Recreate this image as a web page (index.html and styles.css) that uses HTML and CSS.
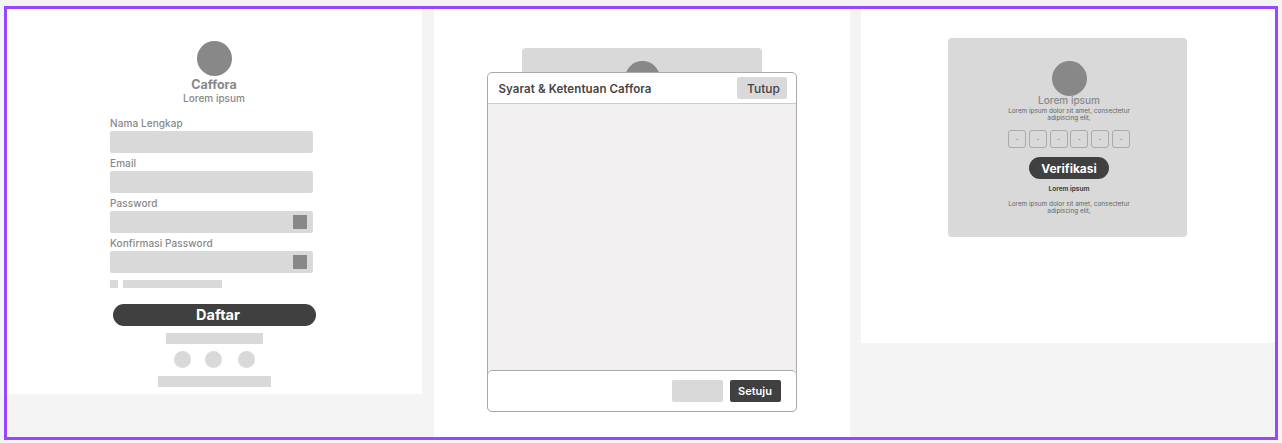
FILE: index.html
```html
<!DOCTYPE html>
<html lang="en">
<head>
  <meta charset="UTF-8" />
  <title>Caffora Wireframe</title>
  <link rel="stylesheet" href="styles.css">
</head>
<body>
  <div class="frame">

    <section class="panel panel-register">
      <div class="avatar"></div>
      <h1 class="brand">Caffora</h1>
      <p class="tagline">Lorem ipsum</p>

      <form class="form">
        <label class="label">Nama Lengkap</label>
        <div class="input"></div>
        <label class="label">Email</label>
        <div class="input"></div>
        <label class="label">Password</label>
        <div class="input"><span class="eye"></span></div>
        <label class="label">Konfirmasi Password</label>
        <div class="input"><span class="eye"></span></div>
        <div class="terms">
          <span class="check"></span>
          <span class="terms-bar"></span>
        </div>
      </form>

      <button class="btn-daftar">Daftar</button>
      <div class="bar bar-or"></div>
      <div class="socials">
        <span class="social"></span>
        <span class="social"></span>
        <span class="social"></span>
      </div>
      <div class="bar bar-login"></div>
    </section>

    <section class="panel panel-terms">
      <div class="back-card">
        <div class="avatar"></div>
      </div>
      <div class="modal">
        <header class="modal-head">
          <h2>Syarat &amp; Ketentuan Caffora</h2>
          <button class="btn-tutup">Tutup</button>
        </header>
        <div class="modal-body"></div>
        <footer class="modal-foot">
          <span class="btn-blank"></span>
          <button class="btn-setuju">Setuju</button>
        </footer>
      </div>
    </section>

    <section class="panel panel-verify">
      <div class="verify-card">
        <div class="avatar"></div>
        <h2 class="verify-title">Lorem ipsum</h2>
        <p class="small">Lorem ipsum dolor sit amet, consectetur<br>adipiscing elit,</p>
        <div class="otp">
          <span>-</span><span>-</span><span>-</span><span>-</span><span>-</span><span>-</span>
        </div>
        <button class="btn-verify">Verifikasi</button>
        <p class="small small-bold">Lorem ipsum</p>
        <p class="small small-last">Lorem ipsum dolor sit amet, consectetur<br>adipiscing elit,</p>
      </div>
    </section>

  </div>
</body>
</html>
```

FILE: styles.css
```css
* {
  box-sizing: border-box;
}

html, body {
  height: 100%;
}

body {
  margin: 0;
  padding: 6px 4px 3px;
  background-color: #f4f4f4;
  font-family: "Inter", "Open Sans", sans-serif;
  color: #444;
  overflow: hidden;
}

button {
  font-family: inherit;
  border: none;
  padding: 0;
}

h1, h2, p {
  margin: 0;
}

.frame {
  width: 1274px;
  height: 434px;
  border: 3px solid #9747ff;
  background-color: #f4f4f4;
  display: grid;
  grid-template-columns: 415px 416px 414px;
  column-gap: 11.5px;
  align-items: start;
}

.panel {
  background: white;
}

.avatar {
  width: 35px;
  height: 35px;
  border-radius: 50%;
  background-color: #888;
}

/* register */
.panel-register {
  height: 385px;
  padding: 32px 0 0 103px;
}

.panel-register .avatar {
  margin-left: 87px;
}

.brand {
  width: 208px;
  text-align: center;
  font-size: 12.5px;
  line-height: 16px;
  font-weight: 700;
  color: #888;
  margin-top: 1px;
}

.tagline {
  width: 208px;
  text-align: center;
  font-size: 10px;
  line-height: 12px;
  font-weight: 500;
  color: #888;
  margin-top: -1px;
}

.form {
  width: 203px;
  margin-top: 14px;
}

.label {
  display: block;
  font-size: 10px;
  line-height: 10px;
  font-weight: 500;
  letter-spacing: 0.1px;
  color: #888;
  height: 12px;
  margin-bottom: 1px;
}

.input {
  height: 22px;
  background-color: #d9d9d9;
  border-radius: 2px;
  margin-bottom: 5px;
  display: flex;
  align-items: center;
  justify-content: flex-end;
  padding-right: 6px;
}

.eye {
  width: 14px;
  height: 14px;
  background-color: #888;
}

.terms {
  display: flex;
  gap: 5px;
  margin-top: 7px;
}

.check {
  width: 8px;
  height: 8px;
  background-color: #d9d9d9;
}

.terms-bar {
  width: 99px;
  height: 8px;
  background-color: #d9d9d9;
}

.btn-daftar {
  display: block;
  width: 203px;
  height: 22px;
  margin: 16px 0 0 3px;
  border-radius: 11px;
  background-color: #404040;
  color: white;
  font-size: 14.5px;
  font-weight: 700;
  line-height: 22px;
  padding-left: 7px;
}

.bar {
  height: 11px;
  background-color: #d9d9d9;
}

.bar-or {
  width: 97px;
  margin: 7px 0 0 56px;
}

.socials {
  display: flex;
  margin: 7px 0 0 64px;
}

.social {
  width: 17px;
  height: 17px;
  border-radius: 50%;
  background-color: #d9d9d9;
  margin-right: 14px;
}

.social:nth-child(2) {
  margin-right: 16px;
}

.bar-login {
  width: 113px;
  margin: 8px 0 0 48px;
}

/* terms modal */
.panel-terms {
  height: 428px;
  position: relative;
  padding: 39px 0 0 88px;
}

.back-card {
  width: 240px;
  height: 40px;
  background-color: #d9d9d9;
  border-radius: 4px 4px 0 0;
  padding: 13px 0 0 103px;
  overflow: hidden;
}

.modal {
  position: absolute;
  left: 53px;
  top: 63px;
  width: 310px;
  height: 340px;
  background: white;
  border: 1px solid #aaa;
  border-radius: 5px;
  display: flex;
  flex-direction: column;
}

.modal-head {
  height: 31px;
  flex: none;
  display: flex;
  align-items: center;
  justify-content: space-between;
  padding: 0 9px 0 11px;
  border-bottom: 1px solid #ccc;
}

.modal-head h2 {
  font-size: 11.5px;
  font-weight: 600;
  letter-spacing: 0.1px;
  color: #444;
  padding-top: 1px;
}

.btn-tutup {
  width: 50px;
  height: 22px;
  background-color: #d9d9d9;
  border-radius: 2px;
  color: #444;
  font-size: 12px;
  font-weight: 500;
  padding-left: 4px;
}

.modal-body {
  flex: 1;
  background-color: #f1eff0;
}

.modal-foot {
  height: 42px;
  flex: none;
  margin: 0 -1px -1px;
  background: white;
  border: 1px solid #aaa;
  border-radius: 5px;
  display: flex;
  align-items: center;
  justify-content: flex-end;
  gap: 7px;
  padding-right: 15px;
}

.btn-blank {
  width: 51px;
  height: 22px;
  background-color: #d9d9d9;
  border-radius: 2px;
}

.btn-setuju {
  width: 51px;
  height: 22px;
  background-color: #404040;
  color: white;
  border-radius: 2px;
  font-size: 11px;
  font-weight: 600;
}

/* verification */
.panel-verify {
  height: 334px;
  padding: 29px 0 0 87px;
}

.verify-card {
  width: 239px;
  height: 199px;
  background-color: #d9d9d9;
  border-radius: 4px;
  padding: 23px 0 0 3px;
  display: flex;
  flex-direction: column;
  align-items: center;
}

.verify-card .avatar {
  flex: none;
}

.verify-title {
  font-size: 10px;
  line-height: 10px;
  font-weight: 500;
  color: #888;
  margin-top: -1px;
}

.small {
  font-size: 6.4px;
  line-height: 7px;
  text-align: center;
  color: #666;
  margin-top: 3px;
}

.otp {
  display: flex;
  gap: 2.8px;
  margin-top: 8px;
}

.otp span {
  width: 18px;
  height: 18px;
  border: 1px solid #aaa;
  border-radius: 3px;
  font-size: 6px;
  line-height: 16px;
  text-align: center;
  color: #666;
}

.btn-verify {
  width: 80px;
  height: 22px;
  margin-top: 9px;
  border-radius: 11px;
  background-color: #404040;
  color: white;
  font-size: 12px;
  font-weight: 700;
}

.small-bold {
  font-size: 6.5px;
  font-weight: 700;
  color: #444;
  margin-top: 7px;
}

.small-last {
  margin-top: 8px;
}
```
